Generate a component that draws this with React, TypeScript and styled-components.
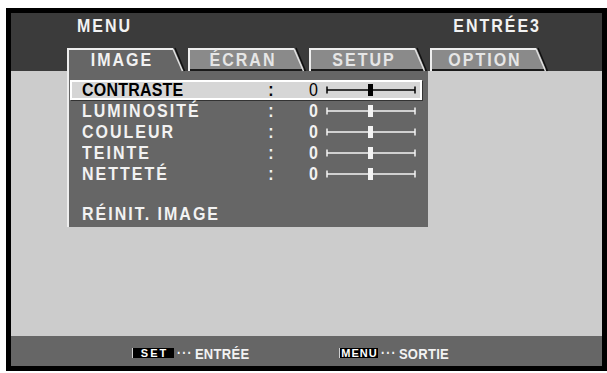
import React from "react";
import styled, { createGlobalStyle, css } from "styled-components";

const stretch = css`
  display: inline-block;
  transform: scaleY(1.18);
`;

const GlobalStyle = createGlobalStyle`
  html, body { margin: 0; padding: 0; background: #fff; }
  body { font-family: "Liberation Sans", Arial, Helvetica, sans-serif; }
`;

const Frame = styled.div`
  box-sizing: border-box;
  margin: 8px 0 0 6px;
  width: 601px;
  height: 363px;
  border: 5px solid #000;
  background: #cccccc;
  display: flex;
  flex-direction: column;
  overflow: hidden;
`;

const Header = styled.header`
  flex: none;
  height: 58px;
  background: #3b3b3b;
  display: flex;
  flex-direction: column;
`;

const TitleRow = styled.div`
  box-sizing: border-box;
  height: 35px;
  padding: 5px 61px 0 66px;
  display: flex;
  justify-content: space-between;
  align-items: flex-start;
`;

const Title = styled.span`
  ${stretch}
  color: #f2f2f2;
  font-weight: bold;
  font-size: 16px;
  line-height: 16px;
  letter-spacing: 2px;
`;

const TabRow = styled.nav`
  height: 23px;
  display: flex;
  gap: 4px;
  padding-left: 56px;
`;

const Tab = styled.div`
  position: relative;
  flex: none;
  width: 117px;
  height: 23px;
`;

const TabShape = styled.svg`
  position: absolute;
  left: 0;
  top: 0;
  overflow: visible;
`;

const TabLabel = styled.span<{ $active?: boolean }>`
  ${stretch}
  position: relative;
  display: block;
  width: 107px;
  padding-left: 3px;
  box-sizing: border-box;
  text-align: center;
  line-height: 23px;
  font-size: 16px;
  font-weight: bold;
  letter-spacing: 2px;
  color: ${(p) => (p.$active ? "#f2f2f2" : "#e6e6e6")};
`;

const Body = styled.main`
  flex: 1;
  padding-left: 56px;
`;

const Panel = styled.section`
  box-sizing: border-box;
  width: 361px;
  border-left: 2px solid #eeeeee;
  background: #666666;
  padding: 9px 0 3px 1px;
  display: flex;
  flex-direction: column;
`;

const Row = styled.div<{ $active?: boolean; $mt?: number }>`
  box-sizing: border-box;
  width: 352px;
  height: 20px;
  margin-top: ${(p) => p.$mt ?? 0}px;
  padding: 0 4px 0 10px;
  border: 2px solid ${(p) => (p.$active ? "#ffffff" : "transparent")};
  background: ${(p) => (p.$active ? "#d6d6d6" : "transparent")};
  box-shadow: ${(p) => (p.$active ? "1px 1px 0 #333" : "none")};
  display: grid;
  grid-template-columns: 184px 10px 42px 8px 90px;
  align-items: center;
  color: ${(p) => (p.$active ? "#000" : "#f2f2f2")};
  font-size: 16px;
  line-height: 14px;
  font-weight: bold;
`;

const Label = styled.span<{ $active?: boolean }>`
  ${stretch}
  letter-spacing: ${(p) => (p.$active ? "0.2px" : "2px")};
  white-space: nowrap;
`;

const Colon = styled.span`
  ${stretch}
  text-align: center;
`;

const Value = styled.span<{ $active?: boolean }>`
  ${stretch}
  text-align: right;
  font-weight: ${(p) => (p.$active ? "normal" : "bold")};
`;

const SliderSvg = styled.svg`
  grid-column: 5;
  display: block;
`;

const Footer = styled.footer`
  flex: none;
  box-sizing: border-box;
  height: 30px;
  background: #666666;
  padding: 4px 0 0 121px;
  display: flex;
  align-items: center;
`;

const Hint = styled.div<{ $w?: number }>`
  display: flex;
  align-items: center;
  width: ${(p) => (p.$w ? `${p.$w}px` : "auto")};
`;

const Badge = styled.span<{ $w: number }>`
  box-sizing: border-box;
  width: ${(p) => p.$w}px;
  height: 10px;
  background: #000;
  border-left: 1px solid #cfcfcf;
  color: #fff;
  font-size: 11px;
  line-height: 10px;
  font-weight: bold;
  text-align: center;
  letter-spacing: ${(p) => (p.$w > 40 ? "2px" : "1px")};
  padding-left: ${(p) => (p.$w > 40 ? "2px" : "1px")};
  overflow: hidden;
`;

const Dots = styled.span`
  ${stretch}
  margin-left: 3px;
  color: #f2f2f2;
  font-size: 12px;
  font-weight: bold;
  letter-spacing: 1.3px;
`;

const HintText = styled.span`
  ${stretch}
  margin-left: 2px;
  color: #f2f2f2;
  font-size: 13px;
  font-weight: bold;
  letter-spacing: 0.3px;
`;

function TabShapeSvg({ active }: { active?: boolean }) {
  return (
    <TabShape width={117} height={23} viewBox="0 0 117 23">
      <polygon points="0,0 107,0 117,23 0,23" fill={active ? "#666666" : "#8a8a8a"} />
      {!active && <line x1={0} y1={22} x2={117} y2={22} stroke="#1a1a1a" strokeWidth={2} />}
      <polyline points="1,23 1,1 106,1" fill="none" stroke="#eeeeee" strokeWidth={2} />
      <line x1={106} y1={1} x2={115.5} y2={23} stroke="#e0e0e0" strokeWidth={1.5} />
      <line x1={108} y1={0} x2={117.5} y2={23} stroke="#111" strokeWidth={1.5} />
    </TabShape>
  );
}

function Slider({ active }: { active?: boolean }) {
  const c = active ? "#000" : "#f4f4f4";
  return (
    <SliderSvg width={90} height={16} viewBox="0 0 90 16">
      <line x1={1} y1={4.5} x2={1} y2={11.5} stroke={c} strokeWidth={1.5} />
      <line x1={1} y1={8} x2={89} y2={8} stroke={c} strokeWidth={1.6} />
      <line x1={89} y1={4.5} x2={89} y2={11.5} stroke={c} strokeWidth={1.5} />
      <rect x={42} y={2} width={5} height={12} fill={c} />
    </SliderSvg>
  );
}

const tabs = ["IMAGE", "ÉCRAN", "SETUP", "OPTION"];
const rows = [
  { label: "CONTRASTE", active: true },
  { label: "LUMINOSITÉ" },
  { label: "COULEUR" },
  { label: "TEINTE" },
  { label: "NETTETÉ" },
];

export default function App() {
  return (
    <>
      <GlobalStyle />
      <Frame>
        <Header>
          <TitleRow>
            <Title>MENU</Title>
            <Title>ENTRÉE3</Title>
          </TitleRow>
          <TabRow>
            {tabs.map((t, i) => (
              <Tab key={t}>
                <TabShapeSvg active={i === 0} />
                <TabLabel $active={i === 0}>{t}</TabLabel>
              </Tab>
            ))}
          </TabRow>
        </Header>
        <Body>
          <Panel>
            {rows.map((r) => (
              <Row key={r.label} $active={r.active} $mt={r.active ? 0 : 1}>
                <Label $active={r.active}>{r.label}</Label>
                <Colon>:</Colon>
                <Value $active={r.active}>0</Value>
                <Slider active={r.active} />
              </Row>
            ))}
            <Row $mt={20}>
              <Label>RÉINIT. IMAGE</Label>
            </Row>
          </Panel>
        </Body>
        <Footer>
          <Hint $w={207}>
            <Badge $w={42}>SET</Badge>
            <Dots>···</Dots>
            <HintText>ENTRÉE</HintText>
          </Hint>
          <Hint>
            <Badge $w={39}>MENU</Badge>
            <Dots>···</Dots>
            <HintText>SORTIE</HintText>
          </Hint>
        </Footer>
      </Frame>
    </>
  );
}
